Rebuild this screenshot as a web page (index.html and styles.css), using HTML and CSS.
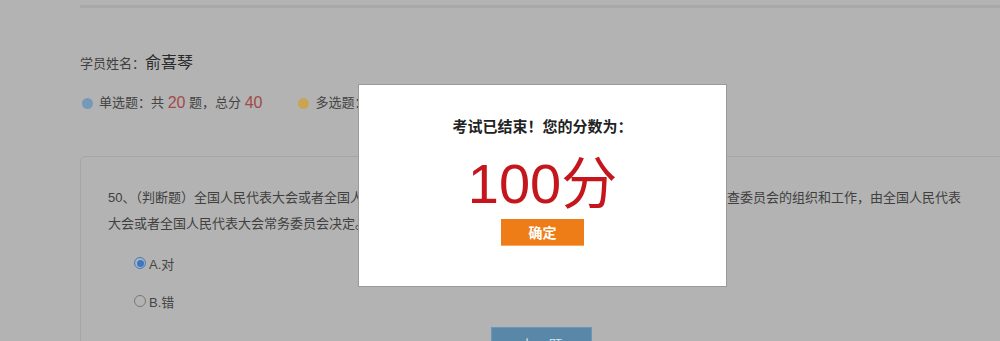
FILE: index.html
```html
<!DOCTYPE html>
<html lang="zh-CN">
<head>
<meta charset="utf-8">
<title>考试结果</title>
<link rel="stylesheet" href="styles.css">
</head>
<body>
<div class="page">
  <div class="topbar"></div>
  <div class="student">学员姓名：<span class="student-name">俞喜琴</span></div>
  <div class="stats">
    <div class="stat"><span class="dot dot-blue"></span>单选题：共 <span class="num">20</span> 题，总分 <span class="num">40</span></div>
    <div class="stat"><span class="dot dot-yellow"></span>多选题：共 <span class="num">20</span> 题，总分 <span class="num">40</span></div>
  </div>
  <div class="card">
    <p class="question">50、（判断题）全国人民代表大会或者全国人民代表大会常务委员会可以组织关于特定问题的调查委员会。调查委员会的组织和工作，由全国人民代表大会或者全国人民代表大会常务委员会决定。</p>
    <div class="options">
      <div class="option"><span class="radio checked"></span>A.对</div>
      <div class="option"><span class="radio"></span>B.错</div>
    </div>
    <div class="actions">
      <button class="btn-prev">上一题</button>
    </div>
  </div>
</div>
<div class="modal">
  <div class="modal-title">考试已结束！您的分数为：</div>
  <div class="modal-score">100分</div>
  <button class="modal-ok">确定</button>
</div>
</body>
</html>
```

FILE: styles.css
```css
html, body {
  margin: 0;
  padding: 0;
}
body {
  width: 1000px;
  height: 341px;
  overflow: hidden;
  background: #b3b3b3;
  font-family: "Liberation Sans", "Noto Sans CJK SC", sans-serif;
  color: #404040;
  position: relative;
}
.page {
  width: 1000px;
  margin-left: 80px;
}
.topbar {
  height: 5px;
  border-bottom: 3px solid #a8a8a8;
}
.student {
  margin-top: 43px;
  height: 24px;
  line-height: 24px;
  font-size: 13px;
  color: #404040;
}
.student-name {
  font-size: 16px;
  color: #2a2a2a;
}
.stats {
  margin-top: 16px;
  display: flex;
  height: 24px;
  line-height: 24px;
  font-size: 13px;
  color: #444;
}
.stat {
  display: flex;
  align-items: center;
  white-space: pre;
  margin-right: 34px;
}
.dot {
  width: 11px;
  height: 11px;
  border-radius: 50%;
  margin: 0 6px 0 2px;
}
.dot-blue { background: #7499bb; }
.dot-yellow { background: #c9a553; }
.num {
  font-size: 16px;
  color: #a24a4a;
}
.card {
  margin-top: 41px;
  border: 1px solid #a6a6a6;
  border-radius: 5px;
  padding: 28px 27px 0;
  height: 300px;
}
.question {
  margin: 0;
  max-width: 860px;
  font-size: 13px;
  line-height: 26px;
  color: #404040;
}
.options {
  margin-top: 7px;
  padding-left: 26px;
}
.option {
  display: flex;
  align-items: center;
  height: 38px;
  font-size: 13px;
  color: #454545;
}
.radio {
  box-sizing: border-box;
  width: 12px;
  height: 12px;
  border-radius: 50%;
  border: 1px solid #787878;
  margin-right: 3px;
  display: flex;
  align-items: center;
  justify-content: center;
}
.radio.checked {
  border-color: #3f7bc2;
}
.radio.checked::after {
  content: "";
  width: 7px;
  height: 7px;
  border-radius: 50%;
  background: #3b78c4;
}
.actions {
  margin-top: 7px;
  padding-left: 383px;
}
.btn-prev {
  width: 101px;
  height: 34px;
  border: 1px solid #6b97b6;
  background: #5887a7;
  color: #d9e4ec;
  font-family: "Liberation Sans", "Noto Sans CJK SC", sans-serif;
  font-size: 14px;
  padding: 0;
}
.modal {
  position: absolute;
  left: 358px;
  top: 84px;
  width: 367px;
  height: 201px;
  background: #fff;
  border: 1px solid #9a9a9a;
  display: flex;
  flex-direction: column;
  align-items: center;
}
.modal-title {
  margin-top: 32px;
  height: 20px;
  line-height: 20px;
  font-size: 15px;
  font-weight: bold;
  color: #222;
}
.modal-score {
  margin-top: 17px;
  height: 60px;
  line-height: 60px;
  font-size: 56px;
  color: #c4161c;
}
.modal-ok {
  margin-top: 5px;
  width: 83px;
  height: 27px;
  border: none;
  border-bottom: 1px solid #f6a766;
  background: #ee7d18;
  color: #fff;
  font-family: "Liberation Sans", "Noto Sans CJK SC", sans-serif;
  font-size: 14px;
  font-weight: bold;
  padding: 0;
}
```
